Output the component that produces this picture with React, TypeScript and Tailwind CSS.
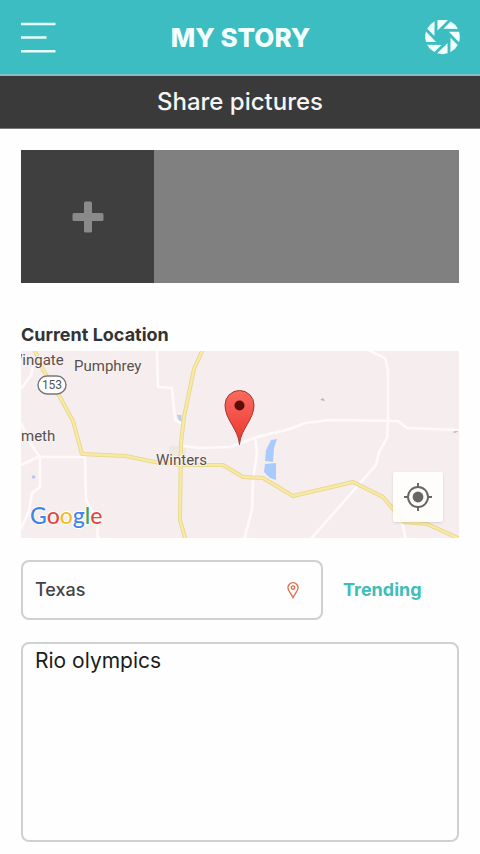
import { useState } from "react";

const bladeAngles = [0, 45, 90, 135, 180, 225, 270, 315];

const highways = [
  "M13 -2 L22 19 L39 46 L52 70 L61 103 L104 105 L134 111 L162 114 L202 114 L222 126 L242 127 L272 145 L332 131 L362 146 L383 171 L406 173 L439 188",
  "M182 -2 L173 18 L163 66 L160 92 L159 169 L165 190",
];

const backRoads = [
  "M136 0 L137 36 L151 37 L154 69 L160 72",
  "M162 95 L179 97 L209 96 L236 86 L269 78 L284 72 L309 69 L377 70 L386 77 L438 79",
  "M347 -1 L364 7 L367 19 L367 69 L366 87 L358 101 L355 114 L289 189",
  "M234 87 L236 102 L232 129 L231 159 L223 189",
  "M0 72 L9 92 L19 106 L19 136 L11 142 L8 160 L0 178",
  "M0 114 L17 106 L64 106 L65 149 L76 169 L77 189",
  "M0 38 L10 24 L14 8",
  "M381 171 L385 189",
];

function MenuIcon() {
  return (
    <svg viewBox="0 0 35 32" className="h-8 w-[35px]" fill="none" stroke="#e6ffff" strokeWidth="2.4">
      <path d="M0 3 H34.5 M0 16.5 H25.5 M0 30.3 H34.5" />
    </svg>
  );
}

function ApertureIcon() {
  return (
    <svg viewBox="-52 -50 104 104" className="size-[35px]" fill="#f0ffff">
      {bladeAngles.map((angle) => (
        <path
          key={angle}
          d="M-15 -19 L-15 -49 A51 51 0 0 1 16 -49 Z"
          transform={`rotate(${angle})`}
        />
      ))}
    </svg>
  );
}

function PinIcon() {
  return (
    <svg viewBox="0 0 12 17" className="h-[17px] w-3 shrink-0" fill="none" stroke="#dc6a48" strokeWidth="1.3">
      <path d="M6 15.6 C4.6 12 0.9 9 0.9 5.8 A5.1 5.1 0 0 1 11.1 5.8 C11.1 9 7.4 12 6 15.6 Z" />
      <circle cx="6" cy="5.6" r="1.7" />
    </svg>
  );
}

function TargetIcon() {
  return (
    <svg viewBox="0 0 28 28" className="size-7" fill="none" stroke="#666" strokeWidth="1.9">
      <circle cx="14" cy="14" r="10" />
      <circle cx="14" cy="14" r="5.4" fill="#666" stroke="none" />
      <path d="M14 0 V4.5 M14 23.5 V28 M0 14 H4.5 M23.5 14 H28" />
    </svg>
  );
}

function LocationMap() {
  return (
    <div className="relative overflow-hidden">
      <svg viewBox="0 0 438 187" className="block w-full" role="img" aria-label="Map of Winters, Texas">
        <defs>
          <linearGradient id="marker" x1="0" y1="0" x2="0" y2="1">
            <stop offset="0" stopColor="#fb6a61" />
            <stop offset="1" stopColor="#e9372c" />
          </linearGradient>
        </defs>
        <rect width="438" height="187" fill="#f6edee" />

        {/* Town and water */}
        <rect x="148" y="95" width="17" height="12" fill="#efe8df" />
        <path d="M250 89 L256 88 L253 97 L252 111 L244 110 L245 99 Z" fill="#a9cbfb" />
        <path d="M244 113 L255 112 L255 129 L249 127 L243 121 Z" fill="#a9cbfb" />
        <path d="M156 64 L160 64 L161 71 L158 70 Z" fill="#bccbe8" />
        <circle cx="12.5" cy="126" r="1.8" fill="#b7c6ec" />
        <path d="M299 49 L302 47 L304 50 Z" fill="#adbbc4" />
        <path d="M432 81 L438 78 L438 80 L434 82 Z" fill="#a7bcc4" />

        {/* Roads */}
        <g fill="none" strokeLinejoin="round">
          {backRoads.map((d) => (
            <path key={d} d={d} stroke="#fffafa" strokeWidth="2.6" />
          ))}
          {highways.map((d) => (
            <path key={d} d={d} stroke="#e6d58c" strokeWidth="4" />
          ))}
          {highways.map((d) => (
            <path key={d} d={d} stroke="#f8e9a3" strokeWidth="2.4" />
          ))}
        </g>

        {/* Places */}
        <g className="font-['Roboto',sans-serif]" fontSize="15" fill="#57504c" stroke="#f9f1f1" strokeWidth="2" paintOrder="stroke">
          <text x="-12" y="14">Wingate</text>
          <text x="53" y="20">Pumphrey</text>
          <text x="0" y="90">meth</text>
          <text x="135" y="114">Winters</text>
        </g>
        <rect x="17" y="25" width="28" height="18" rx="9" fill="#fff" stroke="#77757c" strokeWidth="1.4" />
        <text x="31" y="38" textAnchor="middle" fontSize="12" fill="#55535a" className="font-['Roboto',sans-serif]">
          153
        </text>

        {/* Marker */}
        <path
          d="M218.5 93.5 C217.5 78 204 69 204 54 A14.5 14.5 0 0 1 233 54 C233 69 219.5 78 218.5 93.5 Z"
          fill="url(#marker)"
          stroke="#a3362f"
          strokeWidth="1"
        />
        <circle cx="218.5" cy="54.5" r="5" fill="#5a0d0a" />

        <text x="9" y="173" fontSize="23" fontWeight="500" className="font-['Lato',sans-serif]" stroke="#fff" strokeWidth="2" paintOrder="stroke">
          <tspan fill="#4384ea">G</tspan>
          <tspan fill="#e2483e">o</tspan>
          <tspan fill="#f3bb2a">o</tspan>
          <tspan fill="#4384ea">g</tspan>
          <tspan fill="#3ba45a">l</tspan>
          <tspan fill="#e2483e">e</tspan>
        </text>
      </svg>
      <button
        type="button"
        aria-label="Use my location"
        className="absolute right-4 bottom-4 flex size-[50px] items-center justify-center rounded-xs bg-[#fffefc]/90 shadow"
      >
        <TargetIcon />
      </button>
    </div>
  );
}

export default function App() {
  const [place, setPlace] = useState("Texas");
  const [story, setStory] = useState("Rio olympics");

  return (
    <div className="min-h-screen bg-[#fefefe] font-['Inter',sans-serif] text-[#333]">
      <header className="flex h-[76px] items-center justify-between border-b-2 border-[#86bfc0] bg-[#3bbdc1] pr-5 pl-[21px]">
        <button type="button" aria-label="Menu">
          <MenuIcon />
        </button>
        <h1 className="text-[26px] font-extrabold text-[#f4ffff]">MY STORY</h1>
        <button type="button" aria-label="Camera">
          <ApertureIcon />
        </button>
      </header>

      <h2 className="border-b border-[#777] bg-[#3a3a3a] py-2 text-center text-2xl leading-9 font-medium text-[#f5f5f5]">
        Share pictures
      </h2>

      <main className="px-[21px] pt-[21px] pb-3">
        <div className="flex bg-[#808080]">
          <button
            type="button"
            aria-label="Add picture"
            className="flex size-[133px] items-center justify-center bg-[#3f3f3f]"
          >
            <svg viewBox="0 0 32 32" className="size-8" fill="#8a8a8a">
              <path d="M13.500 0.500 H18.500 Q20 0.500 20 2 V12 H30 Q31.500 12 31.500 13.500 V18.500 Q31.500 20 30 20 H20 V30 Q20 31.500 18.500 31.500 H13.500 Q12 31.500 12 30 V20 H2 Q0.500 20 0.500 18.500 V13.500 Q0.500 12 2 12 H12 V2 Q12 0.500 13.500 0.500 Z" />
            </svg>
          </button>
        </div>

        <h3 className="mt-10 mb-1 text-lg leading-6 font-bold">Current Location</h3>
        <LocationMap />

        <div className="mt-[22px] flex items-center gap-5">
          <label className="flex h-[60px] min-w-0 flex-1 items-center rounded-lg border-2 border-[#d0d0d0] pr-[22px] pl-3">
            <input
              type="text"
              aria-label="Place"
              value={place}
              onChange={(e) => setPlace(e.target.value)}
              className="min-w-0 flex-1 text-lg font-medium text-[#444] outline-none"
            />
            <PinIcon />
          </label>
          <a href="#trending" className="w-[116px] shrink-0 text-lg font-bold text-[#3fbdb8]">
            Trending
          </a>
        </div>

        <textarea
          aria-label="Story"
          value={story}
          onChange={(e) => setStory(e.target.value)}
          className="mt-[22px] block h-[200px] w-full resize-none rounded-lg border-2 border-[#d0d0d0] px-3 py-[3px] text-[21px] leading-7 text-[#1c1c1c] outline-none"
        />
      </main>
    </div>
  );
}
